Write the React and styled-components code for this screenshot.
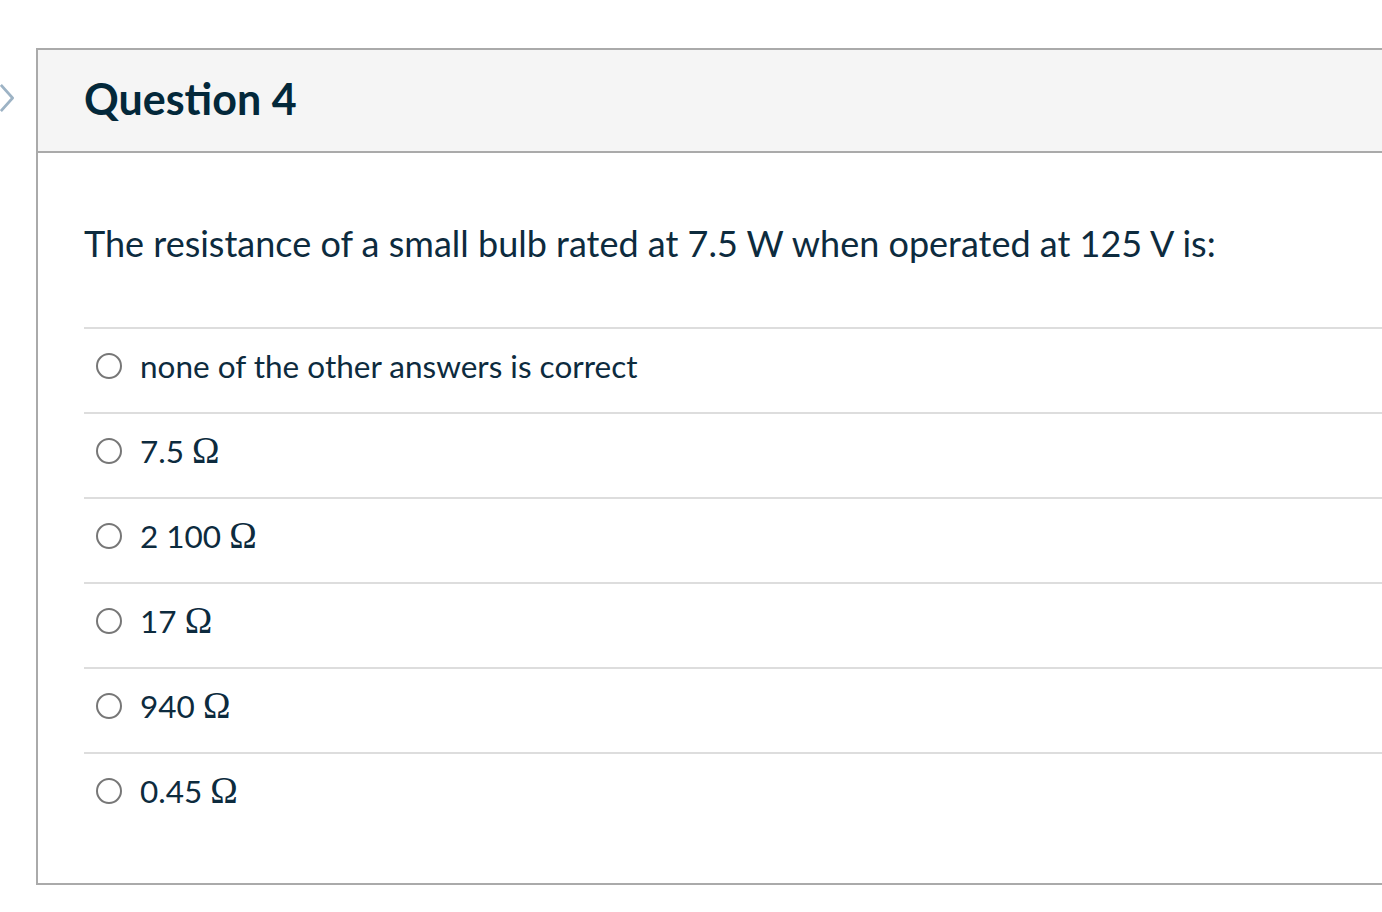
import React from "react";
import styled, { createGlobalStyle } from "styled-components";

const GlobalStyle = createGlobalStyle`
  body {
    margin: 0;
    background: #fff;
    font-family: Lato, "Liberation Sans", sans-serif;
    color: #0d2b3e;
  }
`;

const answers = [
  { text: "none of the other answers is correct" },
  { text: "7.5", unit: true },
  { text: "2 100", unit: true },
  { text: "17", unit: true },
  { text: "940", unit: true },
  { text: "0.45", unit: true },
];

function App() {
  return (
    <>
      <GlobalStyle />
      <Page>
        <Chevron viewBox="0 0 20 32" aria-hidden="true">
          <path d="M1 1.5 L14 16 L1 30.5" />
        </Chevron>
        <Card>
          <Header>
            <Title>Question 4</Title>
          </Header>
          <Body>
            <Prompt>
              The resistance of a small bulb rated at 7.5 W when operated at 125 V is:
            </Prompt>
            <AnswerList>
              {answers.map((a, i) => (
                <Answer key={i}>
                  <Radio type="radio" name="q4" />
                  <Label>
                    {a.text}
                    {a.unit && " "}
                    {a.unit && <Omega>Ω</Omega>}
                  </Label>
                </Answer>
              ))}
            </AnswerList>
          </Body>
        </Card>
      </Page>
    </>
  );
}

export default App;

const Page = styled.div`
  display: flex;
  align-items: flex-start;
  padding-top: 48px;
  position: relative;
`;

const Chevron = styled.svg`
  position: absolute;
  left: 0;
  top: 82px;
  width: 18px;
  height: 32px;
  fill: none;
  stroke: #9db3c5;
  stroke-width: 3;
  stroke-linejoin: round;
`;

const Card = styled.section`
  margin-left: 36px;
  flex: 1;
  border: 2px solid #aaaaaa;
  border-right: none;
`;

const Header = styled.header`
  height: 101px;
  background: #f5f5f5;
  border-bottom: 2px solid #aaaaaa;
  display: flex;
  align-items: center;
  padding-left: 46px;
`;

const Title = styled.h2`
  margin: 0 0 4px;
  font-size: 43px;
  font-weight: 700;
  color: #03283a;
`;

const Body = styled.div`
  padding: 68px 0 46px 46px;
`;

const Prompt = styled.p`
  margin: 0 0 62px;
  font-size: 36px;
  line-height: 44px;
`;

const AnswerList = styled.ul`
  list-style: none;
  margin: 0;
  padding: 0;
`;

const Answer = styled.li`
  height: 85px;
  display: flex;
  align-items: center;
  border-top: 2px solid #dddddd;
  box-sizing: border-box;
  padding-left: 12px;
  padding-bottom: 9px;
`;

const Radio = styled.input`
  appearance: none;
  margin: 0;
  width: 26px;
  height: 26px;
  border: 2px solid #777;
  border-radius: 50%;
  background: #fff;
  flex-shrink: 0;
`;

const Label = styled.span`
  margin-left: 18px;
  font-size: 31.5px;
`;

const Omega = styled.span`
  font-family: "Liberation Serif", serif;
  font-size: 37px;
  line-height: 1;
`;
